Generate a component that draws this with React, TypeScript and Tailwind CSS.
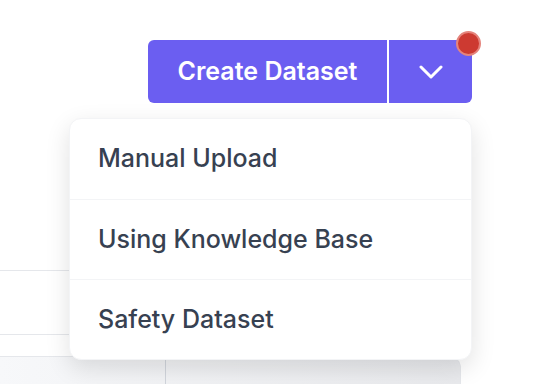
import React from "react";

const items = ["Manual Upload", "Using Knowledge Base", "Safety Dataset"];

const ChevronDown: React.FC = () => (
  <svg width="24" height="14" viewBox="0 0 24 14" fill="none">
    <path d="M2 2l10 10L22 2" stroke="white" strokeWidth="3" strokeLinecap="round" strokeLinejoin="round" />
  </svg>
);

export default function App() {
  return (
    <div className="relative w-[536px] h-[384px] overflow-hidden bg-white font-['Inter',sans-serif]">
      {/* action bar */}
      <div className="flex justify-end pt-[40px] pr-[64px]">
        <div className="relative flex h-[63px]">
          <button className="w-[239px] h-full rounded-l-md bg-[#6b5ef1] text-white text-[25px] font-semibold">
            Create Dataset
          </button>
          <div className="w-[2px] h-full bg-white" />
          <button className="w-[83px] h-full rounded-r-md bg-[#6b5ef1] flex items-center justify-center">
            <ChevronDown />
          </button>
          <span className="absolute -top-[9px] -right-[9px] w-[25px] h-[25px] rounded-full bg-[#cd3a31] border-2 border-[#e5847c]" />
        </div>
      </div>

      {/* table behind */}
      <div className="w-[461px] mt-[167px]">
        <div className="h-[64px] border-t border-gray-200" />
        <div className="h-[22px] border-t border-gray-200" />
        <div className="flex h-[40px] border-t border-r border-gray-200 rounded-tr-xl bg-gradient-to-r from-[#f7f8fa] to-[#e9eaed]">
          <div className="w-[166px] border-r border-gray-300" />
          <div className="flex-1" />
        </div>
      </div>

      {/* dropdown menu */}
      <div className="absolute left-[69px] top-[118px] w-[403px] rounded-xl bg-white border border-gray-100 shadow-[0_8px_24px_rgba(0,0,0,0.12)]">
        {items.map((label, i) => (
          <div
            key={label}
            className={`h-[80px] flex items-center pl-[28px] text-[25px] font-medium text-[#374151] ${
              i > 0 ? "border-t border-gray-100" : ""
            }`}
          >
            {label}
          </div>
        ))}
      </div>
    </div>
  );
}
